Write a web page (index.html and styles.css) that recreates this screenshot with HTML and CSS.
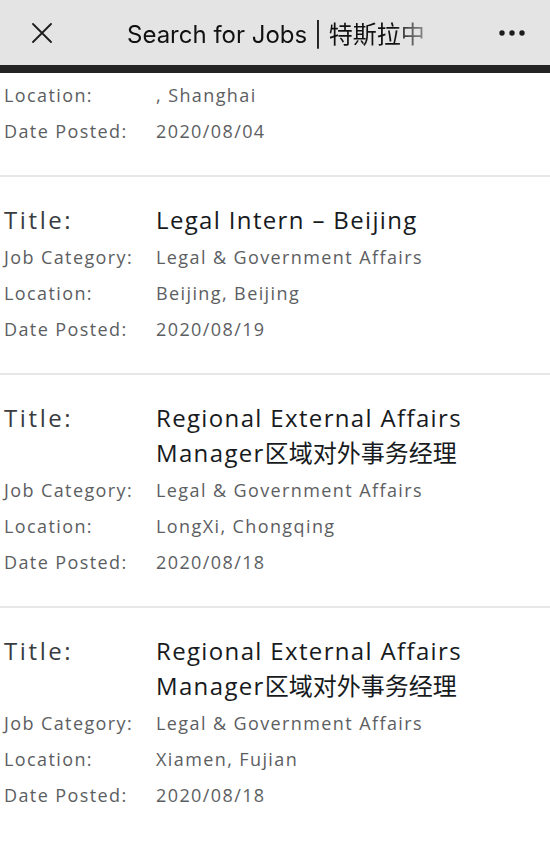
FILE: index.html
```html
<!DOCTYPE html>
<html lang="zh-CN">
<head>
<meta charset="utf-8">
<title>Search for Jobs | 特斯拉中国</title>
<link rel="stylesheet" href="styles.css">
</head>
<body>
<div class="app">
  <header class="navbar">
    <div class="nav-btn nav-close">
      <svg width="20" height="20" viewBox="0 0 20 20"><path d="M1 1 L19 19 M19 1 L1 19" stroke="#1c1c1c" stroke-width="1.8" fill="none" stroke-linecap="round"/></svg>
    </div>
    <div class="nav-title">Search for Jobs | 特斯拉中</div>
    <div class="nav-btn nav-more">
      <svg width="28" height="8" viewBox="0 0 28 8"><circle cx="4" cy="4" r="2.7" fill="#1c1c1c"/><circle cx="14" cy="4" r="2.7" fill="#1c1c1c"/><circle cx="24" cy="4" r="2.7" fill="#1c1c1c"/></svg>
    </div>
  </header>
  <div class="navbar-rule"></div>

  <main class="job-list">
    <section class="job job-first">
      <div class="row"><span class="label">Location:</span><span class="value">, Shanghai</span></div>
      <div class="row"><span class="label">Date Posted:</span><span class="value">2020/08/04</span></div>
    </section>

    <section class="job">
      <div class="row row-title"><span class="label">Title:</span><span class="value">Legal Intern – Beijing</span></div>
      <div class="row"><span class="label">Job Category:</span><span class="value">Legal &amp; Government Affairs</span></div>
      <div class="row"><span class="label">Location:</span><span class="value">Beijing, Beijing</span></div>
      <div class="row"><span class="label">Date Posted:</span><span class="value">2020/08/19</span></div>
    </section>

    <section class="job">
      <div class="row row-title"><span class="label">Title:</span><span class="value"><span class="line">Regional External Affairs</span><span class="line">Manager<span class="cjk">区域对外事务经理</span></span></span></div>
      <div class="row"><span class="label">Job Category:</span><span class="value">Legal &amp; Government Affairs</span></div>
      <div class="row"><span class="label">Location:</span><span class="value">LongXi, Chongqing</span></div>
      <div class="row"><span class="label">Date Posted:</span><span class="value">2020/08/18</span></div>
    </section>

    <section class="job">
      <div class="row row-title"><span class="label">Title:</span><span class="value"><span class="line">Regional External Affairs</span><span class="line">Manager<span class="cjk">区域对外事务经理</span></span></span></div>
      <div class="row"><span class="label">Job Category:</span><span class="value">Legal &amp; Government Affairs</span></div>
      <div class="row"><span class="label">Location:</span><span class="value">Xiamen, Fujian</span></div>
      <div class="row"><span class="label">Date Posted:</span><span class="value">2020/08/18</span></div>
    </section>
  </main>
</div>
</body>
</html>
```
FILE: styles.css
```css
* { box-sizing: border-box; }
html, body { margin: 0; padding: 0; background: #ffffff; }
body {
  font-family: "Open Sans", "Noto Sans CJK SC", sans-serif;
  width: 550px;
  height: 848px;
  overflow: hidden;
}
.app { display: flex; flex-direction: column; }

.navbar {
  height: 65px;
  background: #e4e4e4;
  display: flex;
  align-items: center;
}
.nav-btn {
  display: flex;
  align-items: center;
  justify-content: center;
}
.nav-close { width: 84px; height: 65px; }
.nav-more { width: 76px; height: 65px; margin-left: auto; }
.nav-title {
  margin-left: 43px;
  padding-right: 6px;
  white-space: nowrap;
  font-family: "Inter", "Noto Sans CJK SC", sans-serif;
  font-size: 24px;
  color: #111111;
  -webkit-mask-image: linear-gradient(to right, #000 88%, rgba(0,0,0,0.55) 95%, rgba(0,0,0,0.35) 100%);
  mask-image: linear-gradient(to right, #000 88%, rgba(0,0,0,0.55) 95%, rgba(0,0,0,0.35) 100%);
}
.navbar-rule { height: 8px; background: #242424; }

.job-list { display: flex; flex-direction: column; }
.job {
  padding: 25px 0 26px 4px;
  border-bottom: 2px solid #e7e7e7;
}
.job:last-child { border-bottom: none; }
.job-first { padding-top: 4px; }

.row {
  display: grid;
  grid-template-columns: 152px 1fr;
  font-size: 18px;
  line-height: 36px;
  color: #5c5e62;
  letter-spacing: 1.4px;
}
.row-title {
  font-size: 24px;
  line-height: 35px;
  margin-bottom: 2px;
}
.row-title .label { color: #393c41; letter-spacing: 2.6px; }
.row-title .value { color: #171a20; letter-spacing: 1.35px; }
.row-title .line { display: block; }
.row-title .cjk { letter-spacing: 0; }
```
